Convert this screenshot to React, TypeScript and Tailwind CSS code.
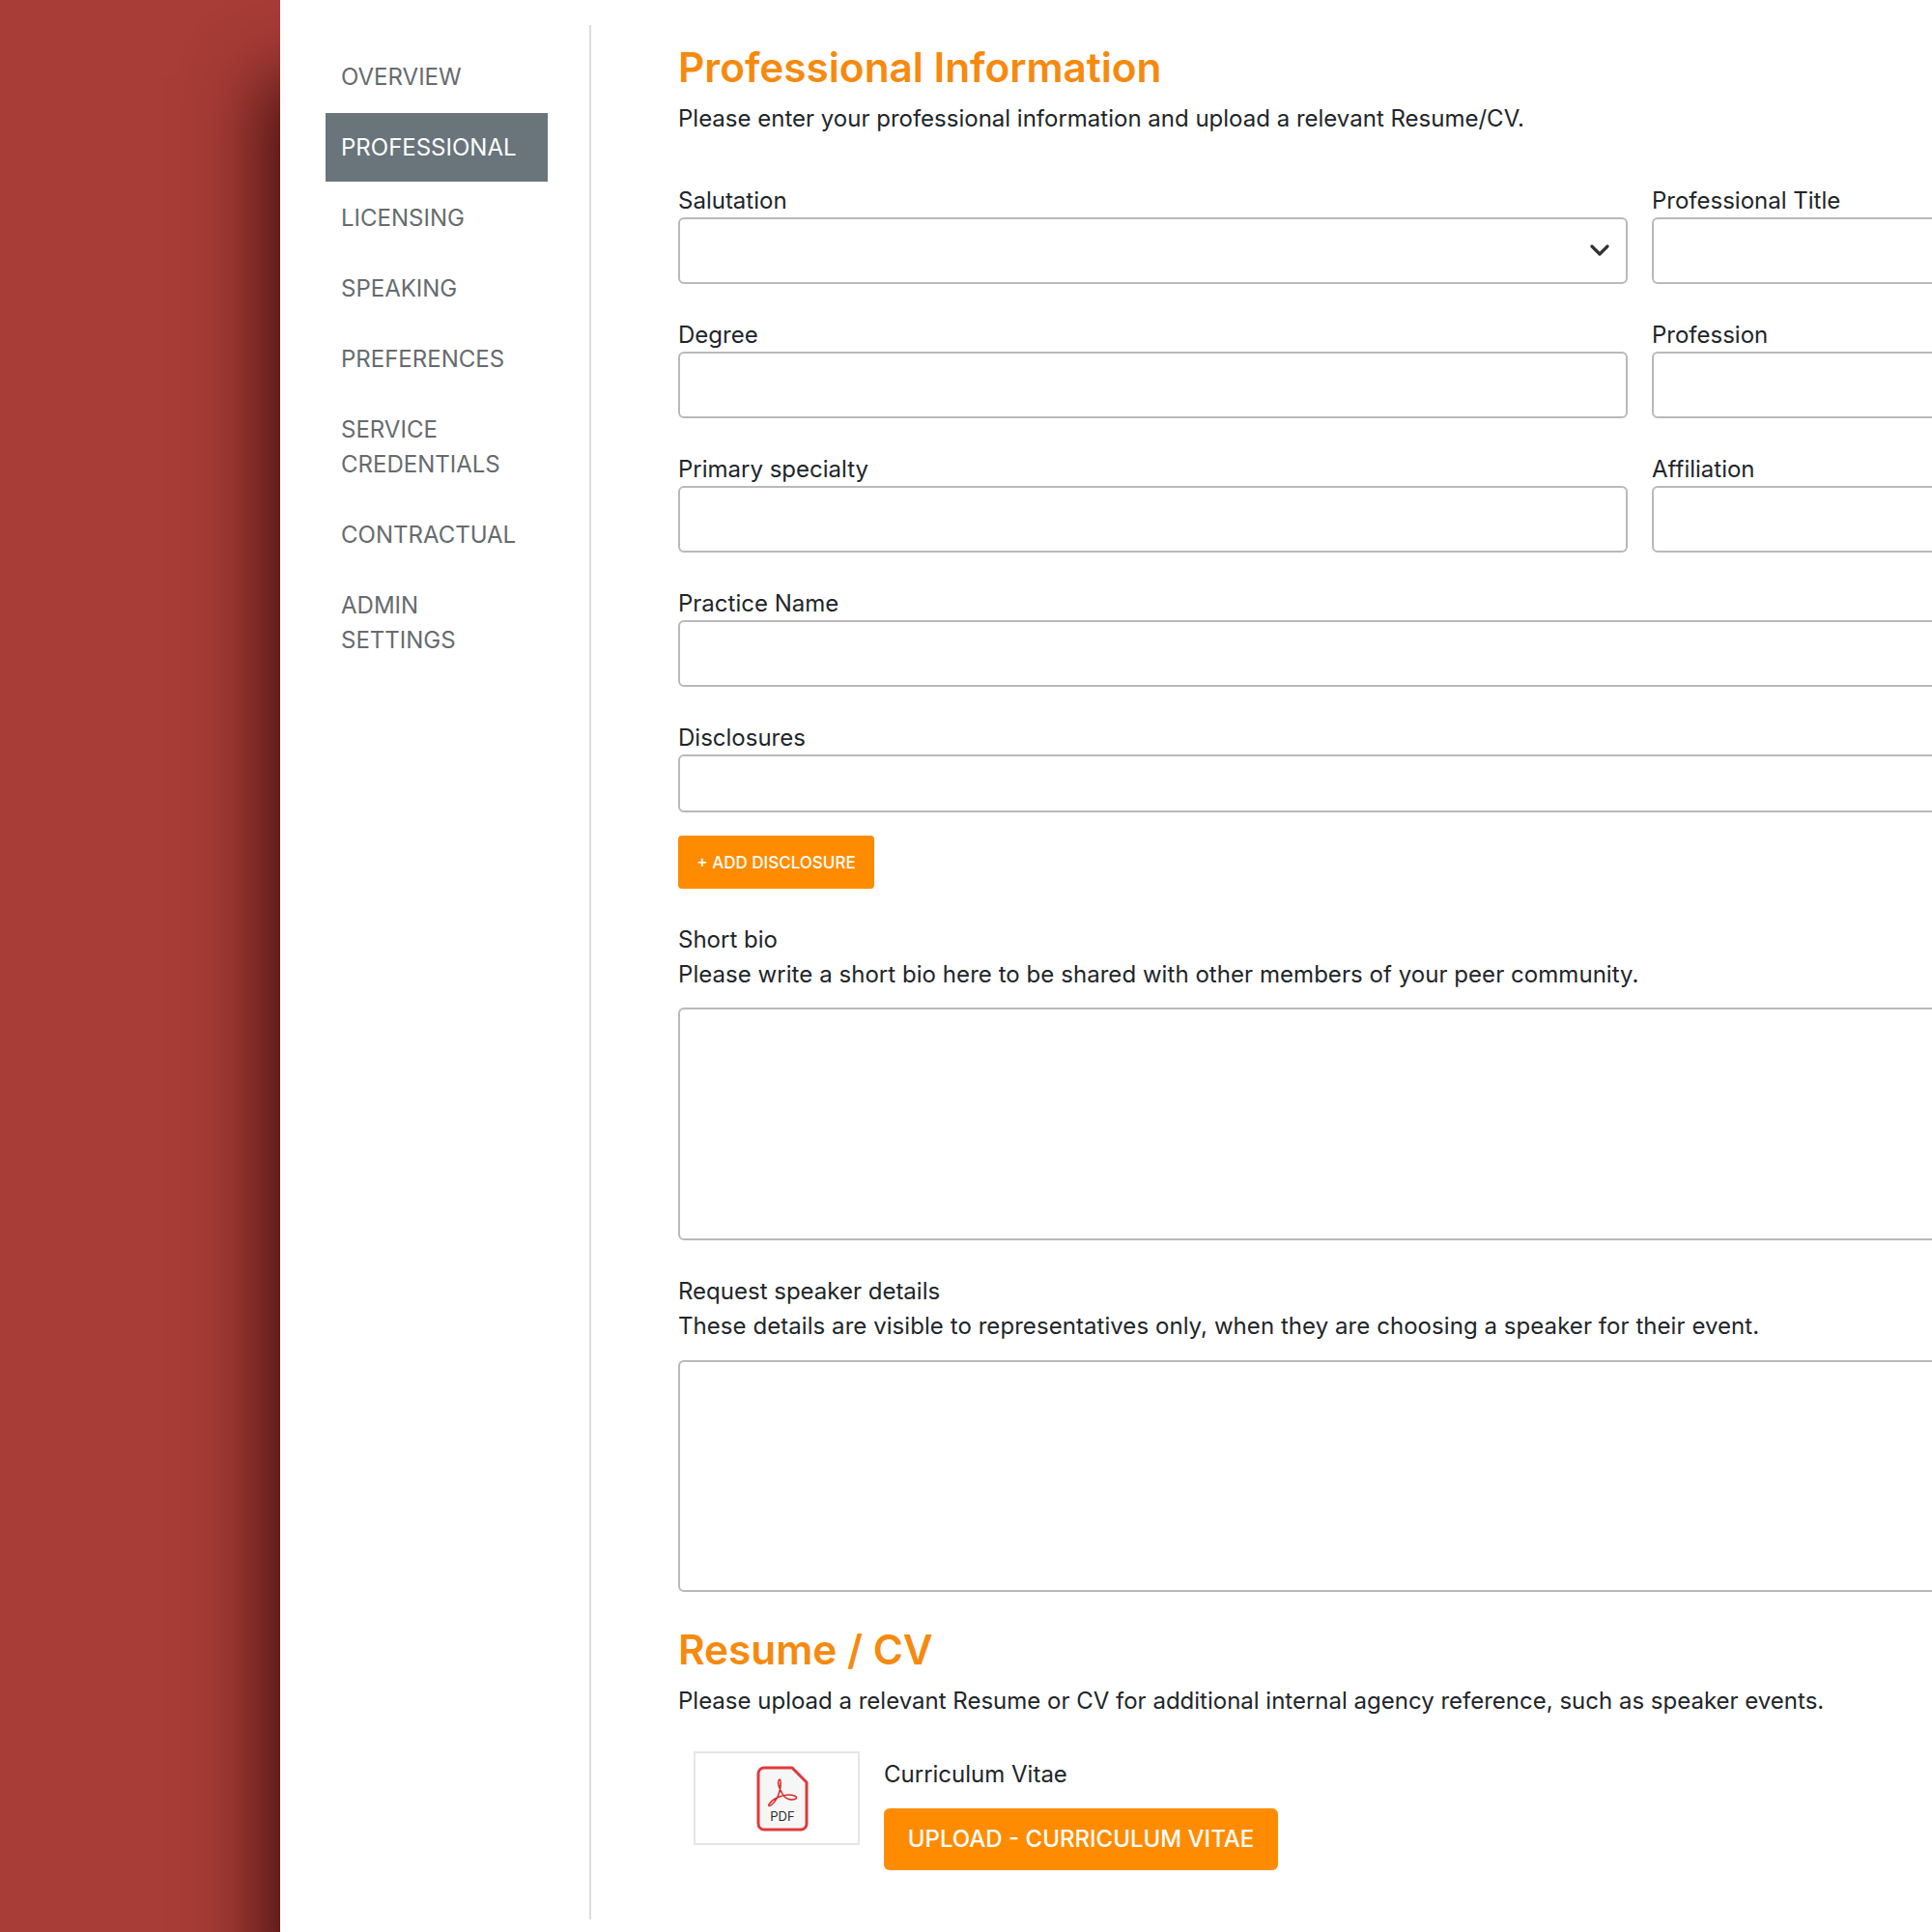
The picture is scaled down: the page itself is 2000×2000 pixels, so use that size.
import { ChevronDown } from "lucide-react";

const navItems = [
  { label: "OVERVIEW" },
  { label: "PROFESSIONAL", active: true },
  { label: "LICENSING" },
  { label: "SPEAKING" },
  { label: "PREFERENCES" },
  { label: "SERVICE CREDENTIALS" },
  { label: "CONTRACTUAL" },
  { label: "ADMIN SETTINGS" },
];

const inputClass =
  "block w-full rounded-[6px] border-2 border-[#b9b9b9] bg-white outline-none";

function Field({ label, children }: { label: string; children?: React.ReactNode }) {
  return (
    <div className="min-w-0">
      <label className="block leading-[35px]">{label}</label>
      {children ?? <input className={`${inputClass} h-[69px]`} />}
    </div>
  );
}

function PdfIcon() {
  return (
    <svg width="54" height="68" viewBox="0 0 54 68" fill="none">
      <path
        d="M8 2 H37 L52 17 V60 a6 6 0 0 1 -6 6 H8 a6 6 0 0 1 -6 -6 V8 a6 6 0 0 1 6 -6 Z"
        fill="#f6f6f6"
        stroke="#e03a3a"
        strokeWidth="3"
      />
      <path
        d="M24 14 C21 16 23 22 27 29 C30 35 37 36 41 34 C43 32 39 30 33 30 C26 30 17 34 13 40 C12 42 14 42 16 40 C21 36 26 26 25 16 C25 14 24 14 24 14 Z"
        stroke="#d92d2d"
        strokeWidth="1.5"
      />
      <text x="27" y="57" textAnchor="middle" fontFamily="Inter, sans-serif" fontSize="13" fill="#2b2b2b">
        PDF
      </text>
    </svg>
  );
}

export default function App() {
  return (
    <div className="flex h-[2000px] w-[2000px] overflow-hidden bg-[#a83c36] font-['Inter',sans-serif] text-[24px] leading-[36px] text-[#212529]">
      <div className="w-[290px] shrink-0" />

      {/* white panel casts the dark edge on the red column */}
      <div className="flex min-w-0 flex-1 bg-white pt-[26px] pb-[13px] shadow-[-18px_80px_70px_rgba(30,0,0,0.72)]">
        <nav className="flex w-[322px] shrink-0 flex-col gap-[2px] border-r-2 border-[#dcdcdc] pt-[18px] pr-[43px] pl-[47px]">
          {navItems.map((item) => (
            <a
              key={item.label}
              className={`block pt-[18px] pr-[17px] pb-[17px] pl-[16px] ${
                item.active ? "bg-[#69747b] text-white" : "text-[#666b6e]"
              }`}
            >
              {item.label}
            </a>
          ))}
        </nav>

        <main className="w-[1990px] shrink-0 pt-[11px] pl-[90px]">
          <h1 className="mb-[2px] text-[42.3px] leading-[66px] font-semibold text-[#f58a0f]">Professional Information</h1>
          <p className="mb-[49px]">Please enter your professional information and upload a relevant Resume/CV.</p>

          <div className="grid grid-cols-[983px_983px] gap-x-[25px] gap-y-[35px]">
            <Field label="Salutation">
              <div className="relative">
                <select className={`${inputClass} h-[69px] appearance-none`} />
                <ChevronDown
                  className="absolute top-[18px] right-[13px] h-[32px] w-[32px] text-[#333]"
                  strokeWidth={2.4}
                />
              </div>
            </Field>
            <Field label="Professional Title" />
            <Field label="Degree" />
            <Field label="Profession" />
            <Field label="Primary specialty" />
            <Field label="Affiliation" />
            <div className="col-span-2">
              <Field label="Practice Name" />
            </div>
            <div className="col-span-2">
              <Field label="Disclosures">
                <input className={`${inputClass} h-[60px]`} />
              </Field>
            </div>
          </div>

          <button className="mt-[24px] h-[55px] w-[203px] rounded-[4px] bg-[#ff8c00] text-[17px] font-medium text-white">
            + ADD DISCLOSURE
          </button>

          <p className="mt-[35px]">Short bio</p>
          <p className="mb-[17px] leading-[35px] tracking-[0.05px]">
            Please write a short bio here to be shared with other members of your peer community.
          </p>
          <textarea className={`${inputClass} h-[241px] resize-none`} />

          <p className="mt-[35px]">Request speaker details</p>
          <p className="mb-[17px] tracking-[0.06px]">
            These details are visible to representatives only, when they are choosing a speaker for their event.
          </p>
          <textarea className={`${inputClass} h-[240px] resize-none`} />

          <h2 className="mt-[27px] text-[42.3px] leading-[66px] font-semibold text-[#f58a0f]">Resume / CV</h2>
          <p className="mt-[2px]">
            Please upload a relevant Resume or CV for additional internal agency reference, such as speaker events.
          </p>

          <div className="mt-[34px] flex gap-[25px] pl-[16px]">
            <div className="flex h-[97px] w-[172px] items-center border-2 border-[#e6e6e6] pl-[63px]">
              <PdfIcon />
            </div>
            <div className="mt-[6px]">
              <p>Curriculum Vitae</p>
              <button className="mt-[17px] h-[64px] w-[408px] rounded-[6px] bg-[#ff8c00] font-medium text-white">
                UPLOAD - CURRICULUM VITAE
              </button>
            </div>
          </div>
        </main>
      </div>
    </div>
  );
}
